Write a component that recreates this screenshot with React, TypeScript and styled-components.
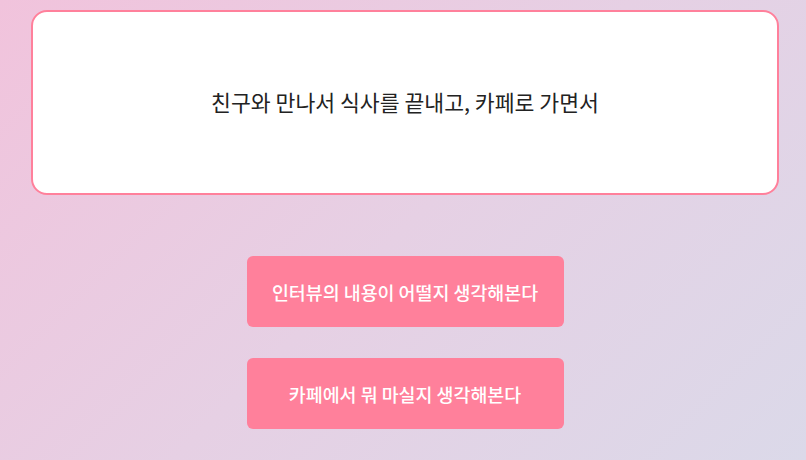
import styled, { createGlobalStyle } from "styled-components";

const GlobalStyle = createGlobalStyle`
  html, body {
    margin: 0;
    padding: 0;
  }
  body {
    font-family: "Noto Sans CJK KR", "Noto Sans", sans-serif;
  }
`;

const Page = styled.div`
  width: 806px;
  height: 460px;
  box-sizing: border-box;
  padding: 10px 27px 0 31px;
  background: linear-gradient(135deg, #f1c3dc 0%, #e6d0e4 50%, #dbd9e9 100%);
  display: flex;
  flex-direction: column;
  align-items: center;
  overflow: hidden;
`;

const Card = styled.div`
  width: 748px;
  height: 185px;
  box-sizing: border-box;
  background: #ffffff;
  border: 2px solid #ff809b;
  border-radius: 16px;
  display: flex;
  align-items: center;
  justify-content: center;
  font-size: 21.6px;
  color: #222222;
  padding-bottom: 2px;
`;

const Choices = styled.div`
  margin-top: 61px;
  display: flex;
  flex-direction: column;
  gap: 31px;
  align-items: center;
`;

const ChoiceButton = styled.button`
  width: 317px;
  height: 71px;
  border: none;
  border-radius: 6px;
  background: #ff809b;
  color: #ffffff;
  font-family: "Noto Sans CJK KR", "Noto Sans", sans-serif;
  font-size: 18.4px;
  font-weight: 500;
  cursor: pointer;
`;

const choices = ["인터뷰의 내용이 어떨지 생각해본다", "카페에서 뭐 마실지 생각해본다"];

const App = () => {
  return (
    <>
      <GlobalStyle />
      <Page>
        <Card>친구와 만나서 식사를 끝내고, 카페로 가면서</Card>
        <Choices>
          {choices.map((c) => (
            <ChoiceButton key={c}>{c}</ChoiceButton>
          ))}
        </Choices>
      </Page>
    </>
  );
};

export default App;
